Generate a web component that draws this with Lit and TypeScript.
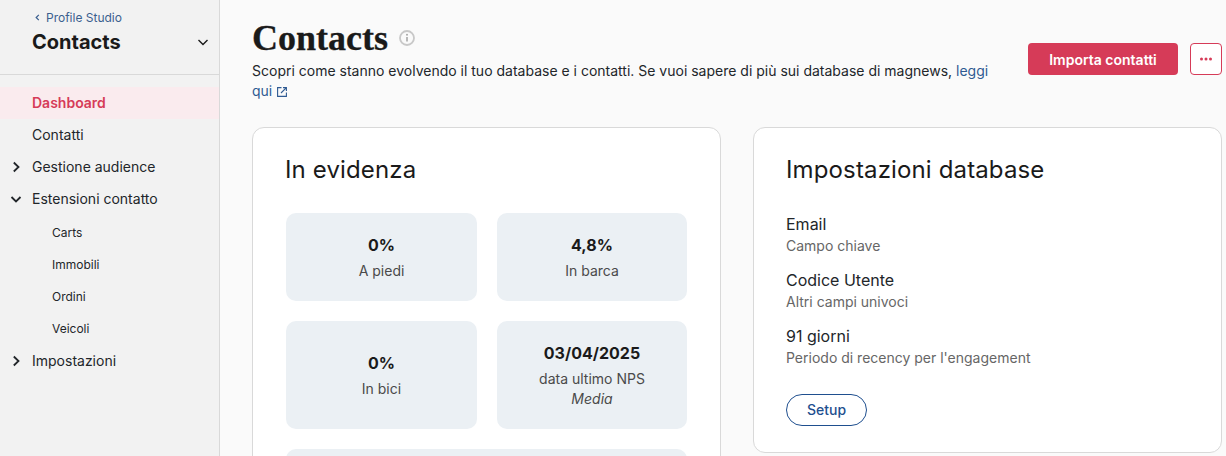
import { LitElement, html, css, svg } from 'lit';
import { customElement } from 'lit/decorators.js';

const chevronRight = svg`<path d="M5.8 3.5 10.5 8 5.8 12.5" fill="none" stroke="currentColor" stroke-width="1.8"/>`;
const chevronDown = svg`<path d="M3.5 6 8 10.5 12.5 6" fill="none" stroke="currentColor" stroke-width="1.8"/>`;

@customElement('app-root')
export class AppRoot extends LitElement {
  static styles = css`
    :host {
      display: flex;
      height: 456px;
      overflow: hidden;
      background: #fafafa;
      color: #1a1a1a;
      font-family: Inter, "Liberation Sans", sans-serif;
      font-size: 14px;
    }
    .sidebar {
      box-sizing: border-box;
      flex: 0 0 220px;
      background: #f2f2f2;
      border-right: 1px solid #d9d9d9;
    }
    .side-head {
      box-sizing: border-box;
      height: 75px;
      padding: 10px 8px 0 32px;
      border-bottom: 1px solid #d9d9d9;
    }
    .back {
      display: flex;
      align-items: center;
      gap: 5px;
      height: 14px;
      margin-left: 2px;
      font-size: 12px;
      color: #3b5f8f;
    }
    .back svg { width: 7px; height: 7px; }
    .product {
      display: flex;
      align-items: center;
      justify-content: space-between;
      height: 26px;
      margin-top: 5px;
      font-size: 20px;
      font-weight: 700;
    }
    .product svg { width: 16px; height: 16px; }
    .product path { stroke-width: 1.4; }
    nav { padding-top: 12px; }
    .item {
      position: relative;
      box-sizing: border-box;
      display: flex;
      align-items: center;
      height: 32px;
      padding: 0 0 2px 32px;
      color: #22262a;
    }
    .item.active {
      background: #faebee;
      color: #d63b58;
      font-weight: 600;
    }
    .subs { margin: 1px 0; }
    .item.sub { padding: 0 0 0 52px; font-size: 12px; }
    .item svg {
      position: absolute;
      left: 8px;
      top: 8px;
      width: 16px;
      height: 16px;
    }
    main {
      box-sizing: border-box;
      flex: 1;
      min-width: 0;
      padding: 16px 4px 0 32px;
    }
    .head {
      display: flex;
      justify-content: space-between;
      height: 111px;
    }
    .intro { width: 742px; }
    .title {
      display: flex;
      align-items: center;
      gap: 11px;
      height: 44px;
    }
    h1 {
      margin: 0;
      font-family: "Liberation Serif", serif;
      font-size: 36px;
      font-weight: 700;
      line-height: 44px;
      -webkit-text-stroke: 0.3px #1a1a1a;
    }
    .title svg { width: 16px; height: 16px; color: #c8c8c8; }
    .intro p {
      margin: 1px 0 0;
      line-height: 20px;
      color: #22262a;
      font-size: 14px;
    }
    .intro a { color: #2f5a92; }
    .intro a svg { width: 10px; height: 10px; margin-left: 5px; vertical-align: -1px; }
    .actions {
      display: flex;
      gap: 12px;
      padding-top: 27px;
    }
    button {
      box-sizing: border-box;
      height: 32px;
      font-family: inherit;
      font-size: 14px;
      font-weight: 600;
      border-radius: 4px;
      padding: 0;
    }
    .primary {
      width: 150px;
      background: #d63b58;
      color: #fff;
      border: 0;
    }
    .more {
      display: flex;
      align-items: center;
      justify-content: center;
      width: 32px;
      background: #fff;
      border: 1px solid #d63b58;
    }
    .more svg { width: 12px; height: 4px; color: #d63b58; }
    .cards {
      display: grid;
      grid-template-columns: 469px 469px;
      gap: 32px;
      align-items: start;
    }
    .card {
      box-sizing: border-box;
      background: #fff;
      border: 1px solid #d9d9d9;
      border-radius: 12px;
      padding: 26px 32px;
    }
    h2 {
      margin: 0;
      font-size: 24px;
      font-weight: 400;
      line-height: 32px;
      letter-spacing: 0.14px;
      color: #1a1a1a;
    }
    .tiles {
      display: grid;
      grid-template-columns: 191px 190px;
      grid-template-rows: 88px 108px 88px;
      gap: 20px;
      margin: 27px 0 0 1px;
    }
    .tile {
      display: flex;
      flex-direction: column;
      align-items: center;
      justify-content: center;
      padding-top: 2px;
      background: #ebf0f4;
      border-radius: 10px;
      color: #4a4a4a;
      line-height: 20px;
      text-align: center;
    }
    .tile.wide { grid-column: span 2; }
    .tile b {
      margin-bottom: 6px;
      font-size: 16px;
      font-weight: 700;
      line-height: 20px;
      color: #1a1a1a;
    }
    .tile i { font-style: italic; }
    .card.settings { height: 326px; }
    .settings dl { margin: 26px 0 0; }
    .settings dt { font-size: 16px; line-height: 24px; color: #22262a; }
    .settings dd {
      margin: 0 0 12px;
      font-size: 14px;
      line-height: 20px;
      color: #666;
    }
    .setup {
      display: block;
      width: 81px;
      height: 32px;
      margin-top: 26px;
      padding-bottom: 2px;
      background: #fff;
      border: 1px solid #1f4f8f;
      border-radius: 16px;
      color: #1f4f8f;
      font-weight: 500;
    }
  `;

  render() {
    return html`
      <aside class="sidebar">
        <div class="side-head">
          <div class="back">
            <svg viewBox="0 0 8 8"><path d="M5.5 1 2.5 4l3 3" fill="none" stroke="currentColor" stroke-width="1.4"/></svg>
            Profile Studio
          </div>
          <div class="product">Contacts <svg viewBox="0 0 16 16">${chevronDown}</svg></div>
        </div>
        <nav>
          <div class="item active">Dashboard</div>
          <div class="item">Contatti</div>
          <div class="item"><svg viewBox="0 0 16 16">${chevronRight}</svg>Gestione audience</div>
          <div class="item"><svg viewBox="0 0 16 16">${chevronDown}</svg>Estensioni contatto</div>
          <div class="subs">
            <div class="item sub">Carts</div>
            <div class="item sub">Immobili</div>
            <div class="item sub">Ordini</div>
            <div class="item sub">Veicoli</div>
          </div>
          <div class="item"><svg viewBox="0 0 16 16">${chevronRight}</svg>Impostazioni</div>
        </nav>
      </aside>
      <main>
        <div class="head">
          <div class="intro">
            <div class="title">
              <h1>Contacts</h1>
              <svg viewBox="0 0 16 16">
                <circle cx="8" cy="8" r="7" fill="none" stroke="currentColor" stroke-width="1.8"/>
                <path d="M8 7v4.5" stroke="#a8a8a8" stroke-width="1.6"/>
                <circle cx="8" cy="4.8" r="1" fill="#a8a8a8"/>
              </svg>
            </div>
            <p>Scopri come stanno evolvendo il tuo database e i contatti. Se vuoi sapere di più sui database di magnews, <a>leggi qui<svg viewBox="0 0 10 10"><path d="M4.5.6H.6v8.8h8.8V5.5M6 .6h3.4V4M9.4.6 4 6" fill="none" stroke="currentColor" stroke-width="1.1"/></svg></a></p>
          </div>
          <div class="actions">
            <button class="primary">Importa contatti</button>
            <button class="more"><svg viewBox="0 0 12 4"><circle cx="1.5" cy="2" r="1.5" fill="currentColor"/><circle cx="6" cy="2" r="1.5" fill="currentColor"/><circle cx="10.5" cy="2" r="1.5" fill="currentColor"/></svg></button>
          </div>
        </div>
        <div class="cards">
          <section class="card">
            <h2>In evidenza</h2>
            <div class="tiles">
              <div class="tile"><b>0%</b>A piedi</div>
              <div class="tile"><b>4,8%</b>In barca</div>
              <div class="tile"><b>0%</b>In bici</div>
              <div class="tile"><b>03/04/2025</b>data ultimo NPS<i>Media</i></div>
              <div class="tile wide"></div>
            </div>
          </section>
          <section class="card settings">
            <h2>Impostazioni database</h2>
            <dl>
              <dt>Email</dt><dd>Campo chiave</dd>
              <dt>Codice Utente</dt><dd>Altri campi univoci</dd>
              <dt>91 giorni</dt><dd>Periodo di recency per l'engagement</dd>
            </dl>
            <button class="setup">Setup</button>
          </section>
        </div>
      </main>
    `;
  }
}
